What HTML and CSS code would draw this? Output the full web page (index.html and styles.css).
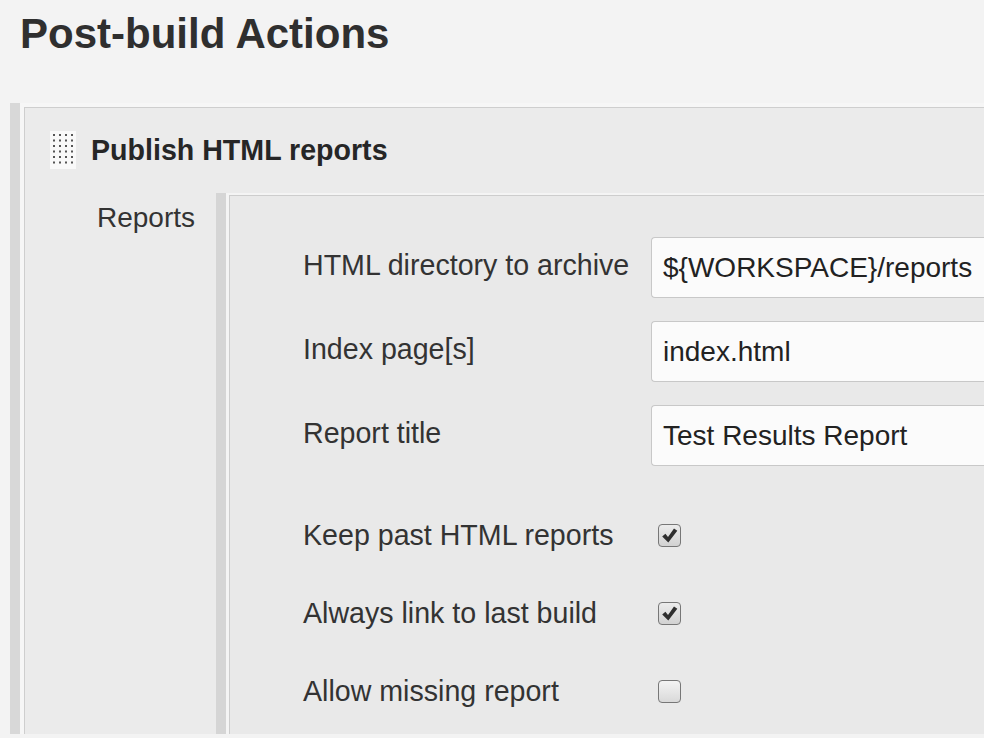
FILE: index.html
```html
<!DOCTYPE html>
<html lang="en">
<head>
<meta charset="utf-8">
<title>Post-build Actions</title>
<link rel="stylesheet" href="styles.css">
</head>
<body>
<h1 class="title">Post-build Actions</h1>
<div class="section">
  <div class="panel">
    <div class="panel-head">
      <span class="handle">
        <svg width="26" height="38" viewBox="0 0 26 38">
          <rect width="26" height="38" fill="#f9f9f9"/>
          <g fill="#555">
            <rect x="3" y="3" width="2" height="2"/><rect x="9" y="3" width="2" height="2"/><rect x="15" y="3" width="2" height="2"/><rect x="21" y="3" width="2" height="2"/>
            <rect x="3" y="8.5" width="2" height="2"/><rect x="9" y="8.5" width="2" height="2"/><rect x="15" y="8.5" width="2" height="2"/><rect x="21" y="8.5" width="2" height="2"/>
            <rect x="3" y="14" width="2" height="2"/><rect x="9" y="14" width="2" height="2"/><rect x="15" y="14" width="2" height="2"/><rect x="21" y="14" width="2" height="2"/>
            <rect x="3" y="19.5" width="2" height="2"/><rect x="9" y="19.5" width="2" height="2"/><rect x="15" y="19.5" width="2" height="2"/><rect x="21" y="19.5" width="2" height="2"/>
            <rect x="3" y="25" width="2" height="2"/><rect x="9" y="25" width="2" height="2"/><rect x="15" y="25" width="2" height="2"/><rect x="21" y="25" width="2" height="2"/>
            <rect x="3" y="30.5" width="2" height="2"/><rect x="9" y="30.5" width="2" height="2"/><rect x="15" y="30.5" width="2" height="2"/><rect x="21" y="30.5" width="2" height="2"/>
          </g>
        </svg>
      </span>
      <span class="panel-title">Publish HTML reports</span>
    </div>
    <div class="panel-body">
      <div class="label-cell">Reports</div>
      <div class="sub">
        <div class="sub-panel">
          <div class="field">
            <div class="field-label">HTML directory to archive</div>
            <div class="field-input">${WORKSPACE}/reports</div>
          </div>
          <div class="field">
            <div class="field-label">Index page[s]</div>
            <div class="field-input">index.html</div>
          </div>
          <div class="field">
            <div class="field-label">Report title</div>
            <div class="field-input">Test Results Report</div>
          </div>
          <div class="check-row first">
            <div class="check-label">Keep past HTML reports</div>
            <span class="checkbox checked">
              <svg width="21" height="21" viewBox="0 0 21 21"><path d="M3.2 11.6 L6.4 8.7 L9 12 L15 3.4 L18.3 5.8 L9.3 17.6 Z" fill="#2e2e2e"/></svg>
            </span>
          </div>
          <div class="check-row">
            <div class="check-label">Always link to last build</div>
            <span class="checkbox checked">
              <svg width="21" height="21" viewBox="0 0 21 21"><path d="M3.2 11.6 L6.4 8.7 L9 12 L15 3.4 L18.3 5.8 L9.3 17.6 Z" fill="#2e2e2e"/></svg>
            </span>
          </div>
          <div class="check-row">
            <div class="check-label">Allow missing report</div>
            <span class="checkbox"></span>
          </div>
        </div>
      </div>
    </div>
  </div>
</div>
</body>
</html>
```
FILE: styles.css
```css
html, body {
  margin: 0;
  padding: 0;
}

body {
  width: 984px;
  height: 738px;
  overflow: hidden;
  background: #f3f3f3;
  font-family: "Liberation Sans", Arial, sans-serif;
  color: #333;
}

.title {
  margin: 0;
  padding: 10px 0 0 20px;
  font-size: 42px;
  line-height: 48px;
  font-weight: bold;
  color: #2f2f2f;
}

.section {
  margin: 45px 0 0 10px;
  border-left: 10px solid #d8d8d8;
  padding: 4px 0 0 4px;
  background: #f6f6f6;
}

.panel {
  border-top: 1px solid #cecece;
  border-left: 1px solid #cecece;
  background: #ebebeb;
}

.panel-head {
  display: flex;
  align-items: center;
  padding: 23px 0 0 25px;
  height: 38px;
}

.handle {
  display: block;
  width: 26px;
  height: 38px;
}

.handle svg {
  display: block;
}

.panel-title {
  margin-left: 15px;
  font-size: 28.6px;
  line-height: 34px;
  font-weight: bold;
  color: #262626;
}

.panel-body {
  display: flex;
  margin-top: 24px;
}

.label-cell {
  width: 119px;
  flex: none;
  padding: 9px 0 0 72px;
  font-size: 28px;
  line-height: 32px;
  color: #333;
}

.sub {
  flex: 1;
  min-width: 0;
  border-left: 10px solid #d5d5d5;
  padding: 2px 0 0 3px;
  background: #f4f4f4;
}

.sub-panel {
  border-top: 1px solid #cdcdcd;
  border-left: 1px solid #cdcdcd;
  background: #e9e9e9;
  padding: 41px 0 23px 73px;
}

.field {
  display: flex;
  align-items: flex-start;
}

.field + .field {
  margin-top: 23px;
}

.field-label {
  width: 348px;
  flex: none;
  padding-top: 12px;
  font-size: 28.6px;
  line-height: 32px;
  color: #333;
}

.field-input {
  flex: 1;
  min-width: 0;
  overflow: hidden;
  height: 61px;
  box-sizing: border-box;
  border: 1px solid #c8c8c8;
  border-right: none;
  border-radius: 4px 0 0 4px;
  background: #fbfbfb;
  padding: 0 0 0 11px;
  font-size: 28px;
  line-height: 59px;
  color: #222;
  white-space: nowrap;
}

.check-row {
  display: flex;
  align-items: center;
  height: 40px;
  margin-top: 38px;
}

.check-row.first {
  margin-top: 49px;
}

.check-label {
  width: 355px;
  flex: none;
  font-size: 28.6px;
  line-height: 32px;
  color: #333;
}

.checkbox {
  display: block;
  width: 23px;
  height: 23px;
  box-sizing: border-box;
  border: 1px solid #777;
  border-radius: 4px;
  background: linear-gradient(#f4f4f4, #d9d9d9);
}

.checkbox.checked {
  background: linear-gradient(#ececec, #d2d2d2);
}

.checkbox svg {
  display: block;
}
```
